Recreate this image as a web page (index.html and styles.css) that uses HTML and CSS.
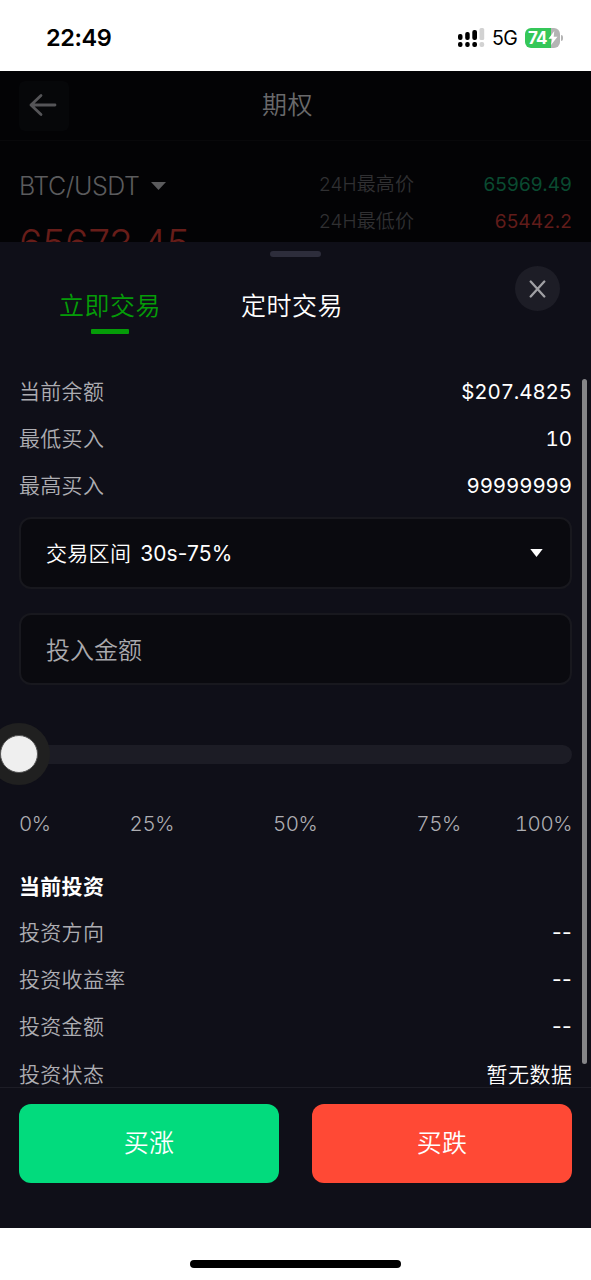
FILE: index.html
```html
<!DOCTYPE html>
<html lang="zh-CN">
<head>
<meta charset="utf-8">
<meta name="viewport" content="width=device-width">
<title>期权</title>
<link rel="stylesheet" href="styles.css">
</head>
<body>
<div class="status">
  <div class="clock">22:49</div>
  <div class="status-right">
    <svg class="signal" width="27" height="20" viewBox="0 0 27 20">
      <g fill="#000"><rect x="0" y="6" width="4.5" height="6" rx="2"/><rect x="7.2" y="4" width="4.5" height="8" rx="2"/><rect x="14.3" y="2" width="4.7" height="10" rx="2"/><rect x="0" y="14" width="4.5" height="5" rx="2"/><rect x="7.2" y="14" width="4.5" height="5" rx="2"/><rect x="14.3" y="14" width="4.7" height="5" rx="2"/></g>
      <g fill="#d2d2d2"><rect x="21.5" y="0" width="4.7" height="12" rx="1.5"/><rect x="21.5" y="14" width="4.7" height="5" rx="2"/></g>
    </svg>
    <span class="network">5G</span>
    <div class="battery"><span>74</span>
      <svg width="10" height="14" viewBox="0 0 10 14"><path d="M6.3 0 0.5 7.8H4.3L3 14 9.5 5.8H5.7Z" fill="#fff"/></svg>
    </div>
    <i class="battery-cap"></i>
  </div>
</div>
<div class="page">
  <header class="topbar">
    <div class="back"><svg width="28" height="24" viewBox="0 0 28 24" fill="none" stroke="#555558" stroke-width="2.8" stroke-linecap="round" stroke-linejoin="round"><path d="M26 12H2M12 2.5 2 12l10 9.5"/></svg></div>
    <h1>期权</h1>
  </header>
  <div class="ticker">
    <div class="pair-col">
      <div class="pair">BTC/USDT<svg width="15" height="8" viewBox="0 0 15 8"><path d="M0 0H15L7.5 8Z" fill="#5b5b5d"/></svg></div>
      <div class="price">65673.45</div>
    </div>
    <div class="stats">
      <div class="stat"><span>24H最高价</span><b class="up">65969.49</b></div>
      <div class="stat"><span>24H最低价</span><b class="down">65442.2</b></div>
    </div>
  </div>
</div>
<main class="sheet">
  <i class="handle"></i>
  <button class="close"><svg width="17" height="18" viewBox="0 0 17 18" stroke="#a0a0a4" stroke-width="2.3" stroke-linecap="round"><path d="M1.7 1.5 15.3 16.5M15.3 1.5 1.7 16.5"/></svg></button>
  <nav class="tabs"><a class="tab active">立即交易</a><a class="tab">定时交易</a></nav>
  <section class="content">
    <div class="row"><span>当前余额</span><b>$207.4825</b></div>
    <div class="row"><span>最低买入</span><b>10</b></div>
    <div class="row"><span>最高买入</span><b>99999999</b></div>
    <div class="field select"><span>交易区间<span class="range">30s-75%</span></span><svg width="13" height="8" viewBox="0 0 13 8"><path d="M.3 0H12.7L6.5 8Z" fill="#fff"/></svg></div>
    <div class="field amount">投入金额</div>
    <div class="slider"><i class="thumb"></i></div>
    <div class="marks"><span>0%</span><span>25%</span><span>50%</span><span>75%</span><span>100%</span></div>
    <h2>当前投资</h2>
    <div class="row"><span>投资方向</span><b class="none">--</b></div>
    <div class="row"><span>投资收益率</span><b class="none">--</b></div>
    <div class="row"><span>投资金额</span><b class="none">--</b></div>
    <div class="row"><span>投资状态</span><b class="empty">暂无数据</b></div>
    <i class="scrollbar"></i>
  </section>
  <footer class="actions"><button class="buy">买涨</button><button class="sell">买跌</button></footer>
</main>
<div class="home"><i></i></div>
</body>
</html>
```

FILE: styles.css
```css
* { box-sizing: border-box; }
body {
  margin: 0;
  width: 591px;
  height: 1280px;
  overflow: hidden;
  display: flex;
  flex-direction: column;
  background: #fff;
  color: #fff;
  font-family: Inter, "Noto Sans CJK SC", sans-serif;
  font-weight: 350;
}
h1, h2 { margin: 0; }
b { font-weight: 400; }
button { border: 0; padding: 0; font: inherit; color: #fff; }

.status {
  height: 71px;
  flex: none;
  display: flex;
  justify-content: space-between;
  padding: 0 28px 0 46px;
  color: #000;
}
.clock { font-size: 23.5px; font-weight: 600; line-height: 76px; letter-spacing: -0.4px; }
.status-right { display: flex; align-items: center; height: 75px; }
.network { font-size: 19.5px; font-weight: 400; margin-left: 7px; width: 33px; letter-spacing: -0.5px; }
.battery {
  width: 35px;
  height: 20px;
  border-radius: 6px;
  display: flex;
  align-items: center;
  padding-left: 3px;
  background: linear-gradient(90deg, #35c759 74%, #b4b4b4 74%);
  color: #fff;
  font-size: 17px;
  font-weight: 700;
  letter-spacing: -0.8px;
}
.battery svg { margin-left: 1px; }
.battery-cap { width: 2px; height: 6px; margin-left: 1px; border-radius: 0 2px 2px 0; background: #b4b4b4; }

.page { height: 171px; flex: none; overflow: hidden; background: #030305; }
.topbar {
  height: 70px;
  display: grid;
  grid-template-columns: 50px 1fr 66px;
  align-items: center;
  padding: 0 19px;
  border-bottom: 1px solid #08080a;
}
.back {
  height: 50px;
  display: flex;
  align-items: center;
  justify-content: center;
  padding: 0 2px 2px 0;
  border-radius: 6px;
  background: #060709;
}
.topbar h1 { text-align: center; font-size: 25px; line-height: 66px; height: 68px; font-weight: 350; color: #69696b; letter-spacing: 0.4px; }
.ticker { display: flex; justify-content: space-between; padding: 25px 19px 0; }
.pair { display: flex; align-items: center; gap: 12px; height: 40px; font-size: 25px; color: #5b5b5d; letter-spacing: -0.45px; }
.price { margin-top: 11px; font-size: 39px; line-height: 54px; letter-spacing: -0.3px; color: #671d19; font-weight: 350; white-space: nowrap; }
.stats { width: 253px; }
.stat { display: flex; justify-content: space-between; font-size: 19px; line-height: 37px; color: #303032; letter-spacing: 0.1px; }
.stat b { font-size: 19px; letter-spacing: 0.1px; }
.up { color: #0a4b31; }
.down { color: #611c1a; }

.sheet { position: relative; height: 986px; flex: none; background: #0f0f18; }
.handle { position: absolute; left: 270px; top: 9px; width: 51px; height: 6px; border-radius: 3px; background: #2d2d3b; }
.close {
  position: absolute;
  left: 515px;
  top: 24px;
  width: 45px;
  height: 45px;
  display: flex;
  align-items: center;
  justify-content: center;
  border-radius: 50%;
  background: #1d1d26;
}
.tabs { height: 125px; display: flex; padding: 38px 0 0 19px; }
.tab {
  width: 182px;
  height: 54px;
  display: flex;
  flex-direction: column;
  align-items: center;
  justify-content: space-between;
  font-size: 25px;
  line-height: 52px;
  letter-spacing: 0.45px;
}
.tab.active { color: #059c08; }
.tab.active::after { content: ""; width: 38px; height: 5px; border-radius: 1px; flex: none; margin-top: -3px; background: #059c08; }

.content { position: relative; height: 720px; overflow: hidden; padding: 0.6px 19px 0; }
.row { display: flex; justify-content: space-between; height: 47.3px; line-height: 47.3px; font-size: 21px; letter-spacing: 0.3px; color: #adadb2; }
.row b { color: #fff; font-size: 20.5px; letter-spacing: -0.1px; font-variant-numeric: tabular-nums; }
.row .none { font-size: 21px; letter-spacing: 0.3px; font-variant-numeric: normal; }
.row .empty { font-size: 21px; letter-spacing: 0.5px; font-weight: 350; margin-right: -0.4px; }
.field {
  height: 72px;
  display: flex;
  align-items: center;
  border: 2px solid #18181e;
  border-radius: 12px;
  padding: 0 25px;
  background: #0a0a0f;
}
.select { justify-content: space-between; margin-top: 7.4px; padding-right: 27px; font-size: 21px; letter-spacing: 0.3px; }
.select > span { padding-bottom: 2px; }
.range { margin-left: 9px; font-weight: 400; letter-spacing: 0.1px; }
.amount { margin-top: 24px; font-size: 24px; color: #a9a9ad; }
.slider { position: relative; height: 19px; margin-top: 60px; border-radius: 10px; background: #1c1c25; }
.thumb {
  position: absolute;
  left: -19px;
  top: -10px;
  width: 38px;
  height: 38px;
  border: 1px solid #555;
  border-radius: 50%;
  background: #efefef;
  box-shadow: 0 0 0 12px #202020;
}
.marks { display: flex; justify-content: space-between; margin-top: 41px; height: 38px; font-size: 20.5px; line-height: 38px; letter-spacing: -0.45px; color: #adadb2; font-variant-numeric: tabular-nums; }
.marks span:nth-child(2) { margin-left: 25px; }
.marks span:nth-child(3) { margin-left: 45px; }
.marks span:nth-child(4) { margin-left: 45px; }
h2 { margin-top: 24px; height: 42px; font-size: 21px; line-height: 40px; font-weight: 700; letter-spacing: 0.3px; }
.scrollbar { position: absolute; left: 582px; top: 12px; width: 5px; height: 685px; border-radius: 3px; background: #858588; }

.actions { height: 141px; display: grid; grid-template-columns: 1fr 1fr; gap: 33px; padding: 16px 19px 46px; border-top: 1px solid #1d1d26; }
.actions button { height: 79px; padding-bottom: 5px; border-radius: 12px; font-size: 25px; letter-spacing: 0.3px; }
.buy { background: #02db7d; }
.sell { background: #ff4935; }
.home { height: 52px; flex: none; display: flex; justify-content: center; align-items: flex-start; padding-top: 32px; background: #fff; }
.home i { width: 211px; height: 8px; border-radius: 4px; background: #000; }
```
